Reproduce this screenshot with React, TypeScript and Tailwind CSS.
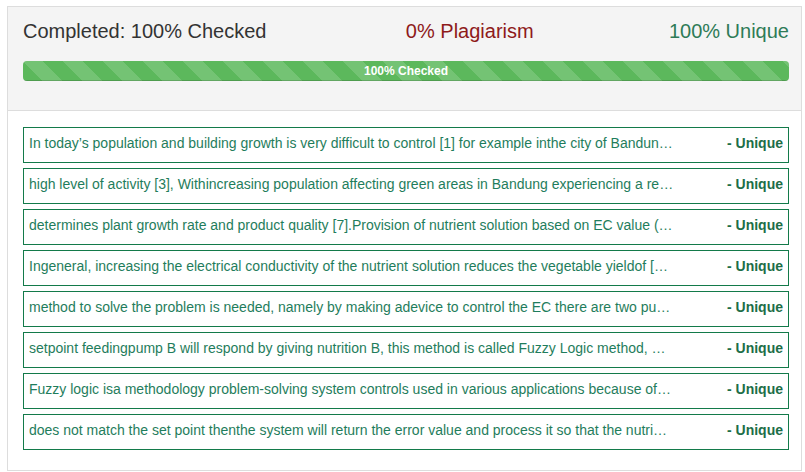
import React from 'react';

interface Sentence {
  text: string;
  status: string;
}

const sentences: Sentence[] = [
  { text: 'In today’s population and building growth is very difficult to control [1] for example inthe city of Bandung, the population continues to increase every year', status: 'Unique' },
  { text: 'high level of activity [3], Withincreasing population affecting green areas in Bandung experiencing a reduction of open land for agriculture', status: 'Unique' },
  { text: 'determines plant growth rate and product quality [7].Provision of nutrient solution based on EC value (Electrical Conductivity)', status: 'Unique' },
  { text: 'Ingeneral, increasing the electrical conductivity of the nutrient solution reduces the vegetable yieldof [8] lettuce and tomato', status: 'Unique' },
  { text: 'method to solve the problem is needed, namely by making adevice to control the EC there are two pumps used in this system', status: 'Unique' },
  { text: 'setpoint feedingpump B will respond by giving nutrition B, this method is called Fuzzy Logic method, which is used to control', status: 'Unique' },
  { text: 'Fuzzy logic isa methodology problem-solving system controls used in various applications because of its simplicity', status: 'Unique' },
  { text: 'does not match the set point thenthe system will return the error value and process it so that the nutrient solution is stable', status: 'Unique' },
];

const App: React.FC = () => {
  return (
    <div className="w-[805px] h-[472px] bg-white pt-[6px] font-['Liberation_Sans',Arial,sans-serif]">
      <div className="ml-[7px] w-[795px] border border-[#dddddd] bg-white">
        {/* header: summary + progress */}
        <div className="bg-[#f4f4f4] border-b border-[#dddddd] pl-[15px] pr-[12px] pt-[13px] pb-[29px]">
          <div className="grid grid-cols-3 text-[20px] leading-[22px]">
            <div className="text-left text-[#333333]">Completed: 100% Checked</div>
            <div className="text-right text-[#8e1a1a]">0% Plagiarism</div>
            <div className="text-right text-[#2e7b57]">100% Unique</div>
          </div>
          <div className="mt-[19px] h-[20px] rounded-[4px] bg-[#f5f5f5] overflow-hidden">
            <div className="w-full h-full flex items-center justify-center bg-[#5cb85c] bg-[linear-gradient(45deg,rgba(255,255,255,.15)_25%,transparent_25%,transparent_50%,rgba(255,255,255,.15)_50%,rgba(255,255,255,.15)_75%,transparent_75%,transparent)] bg-size-[40px_40px] shadow-[inset_0_-1px_0_rgba(0,0,0,0.15)] text-white text-[12px] font-bold leading-[20px]">
              100% Checked
            </div>
          </div>
        </div>

        {/* sentence list */}
        <div className="pl-[15px] pr-[12px] pt-[16px] pb-[20px] flex flex-col gap-[5px]">
          {sentences.map((s, idx) => (
            <div
              key={idx}
              className="h-[36px] border border-[#137a4a] px-[5px] pt-[5px] flex items-start text-[14px] leading-[20px]"
            >
              <span className="w-[645px] truncate text-[#1f7d5c]">{s.text}</span>
              <span className="ml-auto font-bold text-[#1d6e48]">- {s.status}</span>
            </div>
          ))}
        </div>
      </div>
    </div>
  );
};

export default App;
